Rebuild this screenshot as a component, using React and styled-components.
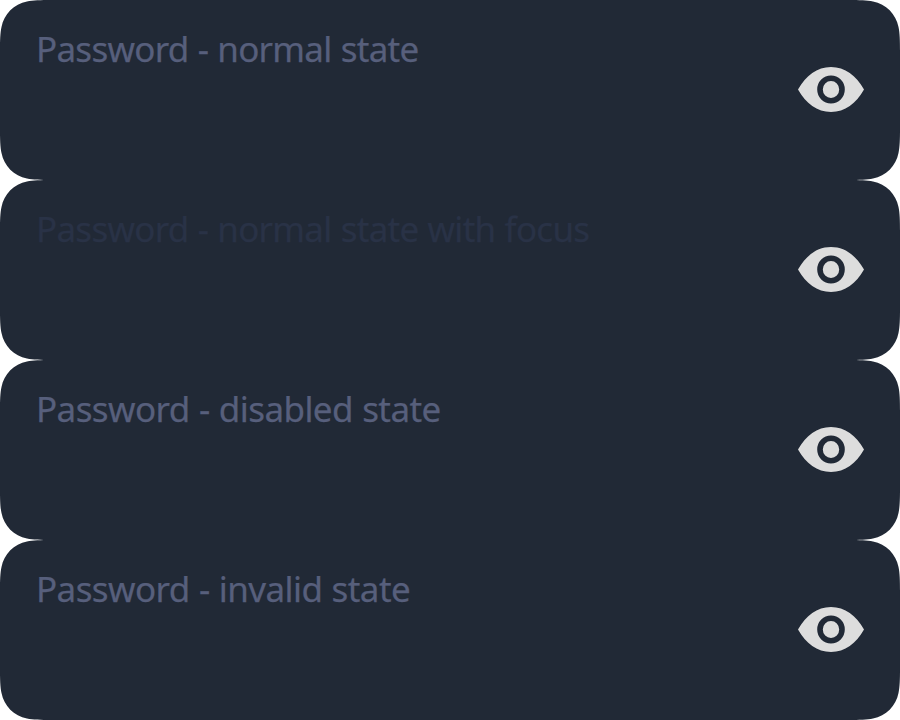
import React from "react";
import styled, { createGlobalStyle } from "styled-components";

const GlobalStyle = createGlobalStyle`
  body { margin: 0; background: #ffffff; }
`;

const FieldList = styled.main`
  display: flex;
  flex-direction: column;
  width: 900px;
`;

const Field = styled.label`
  box-sizing: border-box;
  display: flex;
  align-items: center;
  justify-content: space-between;
  height: 180px;
  padding: 0 36px;
  background: #212936;
  clip-path: path("M0 52C0 40 .2 33 1.500 27C4 14 14 4 27 1.500C33 .2 40 0 52 0H848C860 0 867 .2 873 1.500C886 4 896 14 898.500 27C899.800 33 900 40 900 52V128C900 140 899.800 147 898.500 153C896 166 886 176 873 178.500C867 179.800 860 180 848 180H52C40 180 33 179.800 27 178.500C14 176 4 166 1.500 153C.2 147 0 140 0 128Z");
`;

const Placeholder = styled.span`
  align-self: flex-start;
  margin-top: 25px;
  font: 400 35px/48px "Noto Sans", "Open Sans", sans-serif;
  letter-spacing: ${(p) => p.$tracking}px;
  word-spacing: 0.7px;
  white-space: nowrap;
  color: ${(p) => (p.$focused ? "#293246" : "#575f7c")};
  -webkit-text-stroke: 0.25px currentColor;
`;

const Eye = styled.svg`
  display: block;
  width: 66px;
  height: 46px;
  fill: #dddddd;
`;

const fields = [
  { text: "Password - normal state", tracking: -0.72 },
  { text: "Password - normal state with focus", tracking: -0.72, focused: true },
  { text: "Password - disabled state", tracking: -0.58 },
  { text: "Password - invalid state", tracking: -0.58 },
];

export default function App() {
  return (
    <>
      <GlobalStyle />
      <FieldList>
        {fields.map((f) => (
          <Field key={f.text}>
            <Placeholder $focused={f.focused} $tracking={f.tracking}>
              {f.text}
            </Placeholder>
            <Eye viewBox="0 0 66 46">
              <path
                fillRule="evenodd"
                d="M0 22.500C8 8.500 19 0 33 0S58 8.500 66 22.500C58 36.500 47 45 33 45S8 36.500 0 22.500ZM33 8.500A13.800 14 0 1 0 33 36.500A13.800 14 0 1 0 33 8.500ZM33 14A8.200 8.500 0 1 1 33 31A8.200 8.500 0 1 1 33 14Z"
              />
            </Eye>
          </Field>
        ))}
      </FieldList>
    </>
  );
}
